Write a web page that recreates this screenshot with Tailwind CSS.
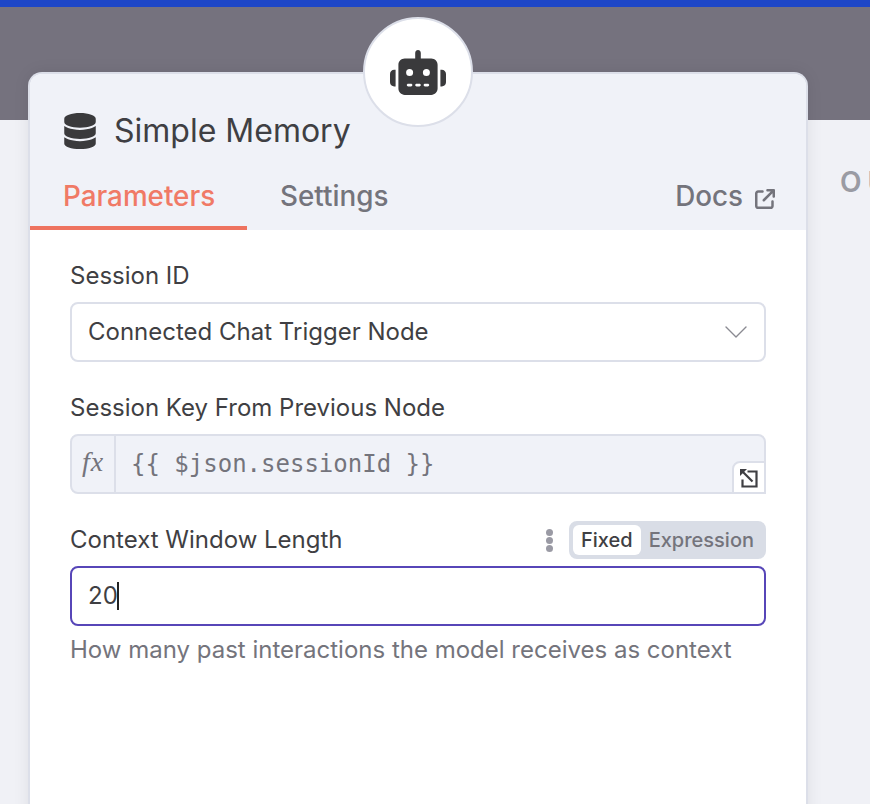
<!DOCTYPE html>
<html lang="en">

<head>
  <meta charset="UTF-8" />
  <title>Simple Memory</title>
  <script src="https://cdn.jsdelivr.net/npm/@tailwindcss/browser@4"></script>
</head>

<body class="font-['Inter',sans-serif] overflow-hidden">
  <div class="relative w-[870px] h-[804px] overflow-hidden bg-[#f0f1f6]">
    <div class="h-[7px] bg-[#1d46c6]"></div>
    <div class="h-[113px] bg-[#75727e]"></div>
    <div class="pl-[840px] pt-[48px] whitespace-nowrap text-[28px] leading-[28px] font-semibold tracking-[6px] text-[#9a9ba3]">OUTPUT</div>

    <!-- node panel -->
    <div class="absolute left-[28px] top-[72px] w-[780px] h-[760px] rounded-t-[14px] border-2 border-[#dcdfe9] border-b-0 bg-white shadow-[0_0_16px_rgba(0,0,0,0.08)] overflow-hidden">
      <div class="h-[156px] bg-[#f0f2f8] flex flex-col">
        <div class="flex items-center gap-[18px] pl-[34px] pt-[30px] h-[84px]">
          <svg class="w-[32px] h-[36px] text-[#3a3a3c]" viewBox="0 0 448 512" fill="currentColor">
            <path d="M448 80v48c0 44.2-100.3 80-224 80S0 172.2 0 128V80C0 35.8 100.3 0 224 0S448 35.8 448 80zM393.2 214.7c20.8-7.4 39.9-16.9 54.8-28.6V288c0 44.2-100.3 80-224 80S0 332.2 0 288V186.1c14.9 11.8 34 21.2 54.8 28.6C99.7 230.7 159.5 240 224 240s124.3-9.3 169.2-25.3zM0 346.1c14.9 11.8 34 21.2 54.8 28.6C99.7 390.7 159.5 400 224 400s124.3-9.3 169.2-25.3c20.8-7.4 39.9-16.9 54.8-28.6V432c0 44.2-100.3 80-224 80S0 476.2 0 432V346.1z" />
          </svg>
          <span class="text-[32px] leading-[40px] text-[#3f3f43]">Simple Memory</span>
        </div>
        <div class="flex flex-1 items-stretch">
          <div class="w-[217px] border-b-4 border-[#ee7360] text-[#f07a66] text-[27.8px] font-medium pl-[33px] pt-[10px] flex items-center">Parameters</div>
          <div class="pl-[33px] text-[#74747c] text-[27.8px] font-medium flex items-center pt-[10px] pb-[4px]">Settings</div>
          <div class="ml-auto pr-[31px] flex items-center gap-[12px] pt-[10px] pb-[4px] text-[#74747c]">
            <span class="text-[27.8px] font-medium">Docs</span>
            <svg class="w-[20px] h-[20px] mt-[3px]" viewBox="0 0 512 512" fill="currentColor">
              <path d="M320 0c-17.7 0-32 14.3-32 32s14.3 32 32 32h82.7L201.4 265.4c-12.5 12.5-12.5 32.8 0 45.3s32.8 12.5 45.3 0L448 109.3V192c0 17.7 14.3 32 32 32s32-14.3 32-32V32c0-17.7-14.3-32-32-32H320zM80 32C35.8 32 0 67.8 0 112V432c0 44.2 35.8 80 80 80H400c44.2 0 80-35.8 80-80V320c0-17.7-14.3-32-32-32s-32 14.3-32 32V432c0 8.8-7.2 16-16 16H80c-8.8 0-16-7.2-16-16V112c0-8.8 7.2-16 16-16H192c17.7 0 32-14.3 32-32s-14.3-32-32-32H80z" />
            </svg>
          </div>
        </div>
      </div>

      <div class="pl-[40px] pr-[40px] pt-[30px] flex flex-col">
        <label class="text-[24px] leading-[32px] text-[#3f3f43]">Session ID</label>
        <div class="mt-[10px] h-[60px] rounded-[8px] border-2 border-[#dcdfe9] bg-white flex items-center justify-between pl-[16px] pr-[16px] text-[24px] text-[#3f3f43]">
          <span>Connected Chat Trigger Node</span>
          <svg class="w-[24px] h-[14px] text-[#8a8a92]" viewBox="0 0 24 14" fill="none" stroke="currentColor" stroke-width="1.4" stroke-linecap="round" stroke-linejoin="round">
            <path d="M2 2l10 10L22 2" />
          </svg>
        </div>

        <label class="mt-[30px] text-[24px] leading-[32px] text-[#3f3f43]">Session Key From Previous Node</label>
        <div class="relative mt-[10px] h-[60px] rounded-[8px] border-2 border-[#dcdfe9] bg-[#f0f2f8] flex items-stretch">
          <div class="w-[44px] border-r-2 border-[#dcdfe9] flex items-center justify-center pb-[4px] font-['Liberation_Serif',serif] italic tracking-[1px] text-[28px] text-[#74747c]">fx</div>
          <div class="pl-[15px] flex items-center font-['DejaVu_Sans_Mono',monospace] text-[24px] text-[#74747c]">{{ $json.sessionId }}</div>
          <div class="absolute right-[-2px] bottom-[-2px] w-[34px] h-[33px] rounded-tl-[8px] border-2 border-[#dcdfe9] bg-white flex items-center justify-center">
            <svg class="w-[20px] h-[20px] text-[#3f3f43]" viewBox="0 0 20 20" fill="none" stroke="currentColor" stroke-width="2.2">
              <path d="M2 2l11.5 11.5" />
              <path d="M1 1h7L1 8z" fill="currentColor" stroke="none" />
              <path d="M8.5 3.5h9v15h-14v-7" />
            </svg>
          </div>
        </div>

        <div class="mt-[27px] h-[38px] flex items-center">
          <label class="text-[24px] text-[#3f3f43]">Context Window Length</label>
          <div class="ml-auto flex flex-col gap-[1px] mr-[16px]">
            <span class="w-[7px] h-[7px] rounded-full bg-[#9a9aa4]"></span>
            <span class="w-[7px] h-[7px] rounded-full bg-[#9a9aa4]"></span>
            <span class="w-[7px] h-[7px] rounded-full bg-[#9a9aa4]"></span>
          </div>
          <div class="h-[38px] rounded-[8px] bg-[#d9dde6] flex items-center pl-[4px] pr-[12px] text-[20px]">
            <span class="h-[30px] rounded-[6px] bg-white px-[8px] flex items-center font-medium text-[#3f3f43]">Fixed</span>
            <span class="pl-[8px] font-medium text-[#74747c]">Expression</span>
          </div>
        </div>
        <div class="mt-[7px] h-[60px] rounded-[8px] border-2 border-[#5746b8] bg-white flex items-center pl-[16px] text-[24px] text-[#3f3f43]">
          <span>20</span><span class="w-[2px] h-[28px] -ml-[1px] bg-[#222]"></span>
        </div>
        <p class="mt-[8px] text-[24px] leading-[32px] text-[#74747c]">How many past interactions the model receives as context</p>
      </div>
    </div>

    <!-- connector badge -->
    <div class="absolute left-[363px] top-[17px] w-[110px] h-[110px] rounded-full bg-white border-2 border-[#dcdfe9] flex items-center justify-center">
      <svg class="w-[56px] h-[45px] text-[#3a3a3c]" viewBox="0 0 640 512" fill="currentColor">
        <path d="M320 0c17.7 0 32 14.3 32 32V96H472c39.8 0 72 32.2 72 72V440c0 39.8-32.2 72-72 72H168c-39.8 0-72-32.2-72-72V168c0-39.8 32.2-72 72-72H288V32c0-17.7 14.3-32 32-32zM208 384c-8.8 0-16 7.2-16 16s7.2 16 16 16h32c8.8 0 16-7.2 16-16s-7.2-16-16-16H208zm96 0c-8.8 0-16 7.2-16 16s7.2 16 16 16h32c8.8 0 16-7.2 16-16s-7.2-16-16-16H304zm96 0c-8.8 0-16 7.2-16 16s7.2 16 16 16h32c8.8 0 16-7.2 16-16s-7.2-16-16-16H400zM264 256a40 40 0 1 0 -80 0 40 40 0 1 0 80 0zm152 40a40 40 0 1 0 0-80 40 40 0 1 0 0 80zM48 224H64V416H48c-26.5 0-48-21.5-48-48V272c0-26.5 21.5-48 48-48zm544 0c26.5 0 48 21.5 48 48v96c0 26.5-21.5 48-48 48H576V224h16z" />
      </svg>
    </div>
  </div>
</body>

</html>
